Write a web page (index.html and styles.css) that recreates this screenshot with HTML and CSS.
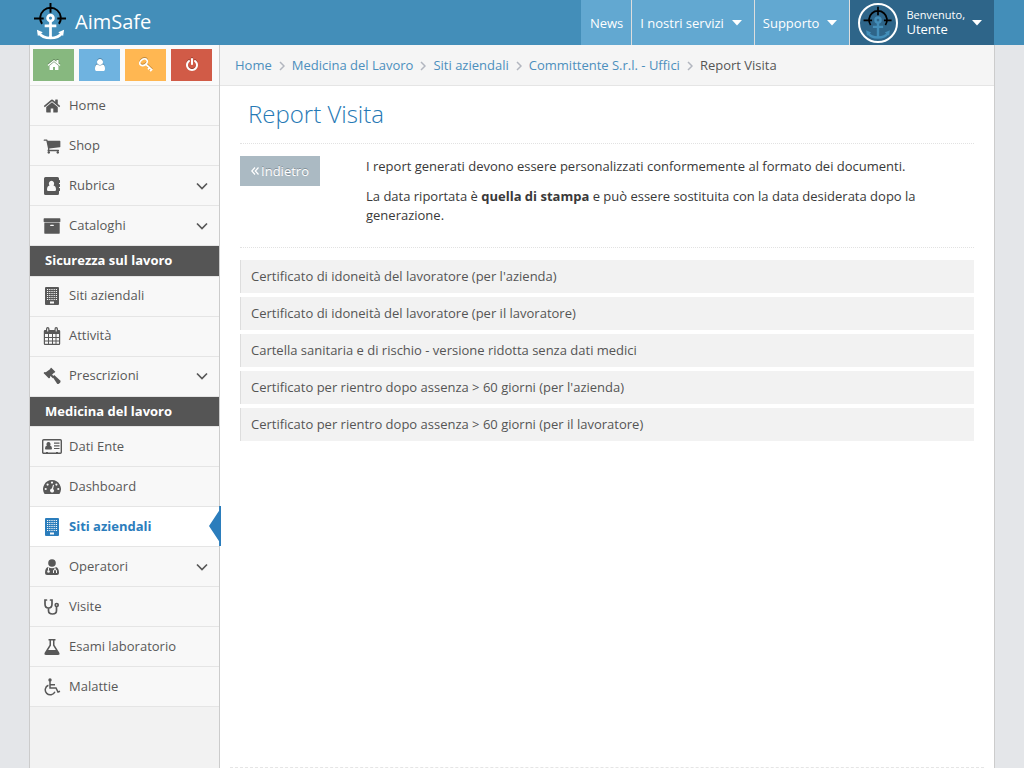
FILE: index.html
```html
<!DOCTYPE html>
<html lang="it">
<head>
<meta charset="utf-8">
<title>Report Visita - AimSafe</title>
<link rel="stylesheet" href="styles.css">
</head>
<body>
<svg class="defs" aria-hidden="true">
  <symbol id="home" viewBox="0 0 1792 1792"><path d="M1472 992v480q0 26-19 45t-45 19h-384v-384h-256v384h-384q-26 0-45-19t-19-45v-480q0-1 .5-3t.5-3l575-474 575 474q1 2 1 6zm223-69l-62 74q-8 9-21 11h-3q-13 0-21-7l-692-577-692 577q-12 8-24 7-13-2-21-11l-62-74q-8-10-7-23.5t11-21.5l719-599q32-26 76-26t76 26l244 204v-195q0-14 9-23t23-9h192q14 0 23 9t9 23v408l219 182q10 8 11 21.5t-7 23.5z"/></symbol>
  <symbol id="user" viewBox="0 0 1792 1792"><path d="M1536 1399q0 109-62.500 187t-150.500 78h-854q-88 0-150.500-78t-62.500-187q0-85 8.500-160.500t31.500-152 58.500-131 94-89 134.500-34.500q131 128 313 128t313-128q76 0 134.500 34.500t94 89 58.500 131 31.500 152 8.500 160.500zm-256-887q0 159-112.500 271.500t-271.500 112.500-271.500-112.500-112.500-271.500 112.500-271.500 271.500-112.500 271.500 112.500 112.500 271.500z"/></symbol>
  <symbol id="power" viewBox="0 0 1792 1792"><path d="M1664 896q0 156-61 298t-164 245-245 164-298 61-298-61-245-164-164-245-61-298q0-182 80.500-343t226.500-270q43-32 95.500-25t83.500 50q32 42 24.500 94.500t-49.500 84.500q-98 74-151.500 181t-53.500 228q0 104 40.500 198.500t109.500 163.500 163.500 109.500 198.500 40.500 198.500-40.500 163.500-109.500 109.500-163.500 40.500-198.500q0-121-53.500-228t-151.500-181q-42-32-49.500-84.500t24.500-94.500q31-43 84-50t95 25q146 109 226.500 270t80.500 343zm-640-768v640q0 52-38 90t-90 38-90-38-38-90v-640q0-52 38-90t90-38 90 38 38 90z"/></symbol>
  <symbol id="key" viewBox="0 0 18 18"><g fill="none" stroke="currentColor" stroke-width="2.200"><ellipse cx="5.800" cy="5.500" rx="5.200" ry="3.800" transform="rotate(-35 5.800 5.500)"/><path d="M8.700 8l8.300 7.500M11.500 14.500l2.600-2.600M14.300 16.800l2.600-2.600"/></g></symbol>
  <symbol id="cart" viewBox="0 0 1792 1792"><path d="M704 1536q0 52-38 90t-90 38-90-38-38-90 38-90 90-38 90 38 38 90zm896 0q0 52-38 90t-90 38-90-38-38-90 38-90 90-38 90 38 38 90zm128-1088v512q0 24-16.500 42.500t-40.500 21.500l-1044 122q13 60 13 70 0 16-24 64h920q26 0 45 19t19 45-19 45-45 19h-1024q-26 0-45-19t-19-45q0-11 8-31.500t16-36 21.500-40 15.500-29.500l-177-823h-204q-26 0-45-19t-19-45 19-45 45-19h256q16 0 28.500 6.500t19.500 15.500 13 24.500 8 26 5.500 29.500 4.500 26h1201q26 0 45 19t19 45z"/></symbol>
  <symbol id="archive" viewBox="0 0 1792 1792"><path d="M1088 832q0-26-19-45t-45-19h-256q-26 0-45 19t-19 45 19 45 45 19h256q26 0 45-19t19-45zm576-192v960q0 26-19 45t-45 19h-1408q-26 0-45-19t-19-45v-960q0-26 19-45t45-19h1408q26 0 45 19t19 45zm64-448v256q0 26-19 45t-45 19h-1536q-26 0-45-19t-19-45v-256q0-26 19-45t45-19h1536q26 0 45 19t19 45z"/></symbol>
  <symbol id="book" viewBox="0 0 18 18"><path fill-rule="evenodd" d="M2.500 0h12q1.500 0 1.500 1.500V3h.700q.3 0 .3.400v2.200q0 .4-.3.400H16v1h.700q.3 0 .3.400v2.200q0 .4-.3.400H16v1h.700q.3 0 .3.400v2.200q0 .4-.3.400H16v2.500q0 1.500-1.500 1.500h-12Q1 18 1 16.500v-15Q1 0 2.500 0zM8.500 3.700a2.700 2.900 0 0 0-2 4.800Q4 9 4 12.800q0 1.200 1.200 1.200h6.600q1.200 0 1.200-1.200 0-3.800-2.500-4.300a2.700 2.900 0 0 0-2-4.800z"/></symbol>
  <symbol id="building" viewBox="0 0 18 18"><path d="M2 1q0-1 1-1h12q1 0 1 1v16q0 1-1 1H3q-1 0-1-1z"/><path class="cut" d="M4 2.500h10M4 4.500h10M4 6.500h10M4 8.500h10M4 10.500h10M4 12.500h10" stroke-dasharray="1.200 1"/><path class="cut-fill" d="M7 14.500h4v2H7z"/></symbol>
  <symbol id="calendar" viewBox="0 0 18 18"><path fill-rule="evenodd" d="M2 3h1V2Q3 0 4.700 0T6.500 2v1h5V2q0-2 1.700-2T15 2v1h1q1 0 1.200 1v12.700q0 1.200-1.200 1.200H2Q.8 17.900.8 16.700V4.200Q.8 3 2 3zm0 4v3h3V7zm4 0v3h3V7zm4 0v3h2.500V7zm3.500 0v3H16V7zM2 11v2.500h3V11zm4 0v2.500h3V11zm4 0v2.500h2.500V11zm3.500 0v2.500H16V11zM2 14.500v2.300h3v-2.300zm4 0v2.300h3v-2.300zm4 0v2.300h2.500v-2.300zm3.500 0v2.300H16v-2.300z"/><path class="cut" d="M4.700 1.500v3M13.200 1.500v3"/></symbol>
  <symbol id="gavel" viewBox="0 0 18 18"><path d="M7.500 1l.8-.3 4 4-.4.900-.9.100-4 4 .1.900-.7.600-.7.100-5-5 .2-.8.900-.4 1 .1L7.300 2z"/><path d="M9.500 9.800l1.700-1.700 6 5.500q.8.900 0 1.800l-1.300 1.300q-.9.700-1.800 0z"/><path d="M8 8l2.600 2.600" stroke="currentColor" stroke-width="2"/></symbol>
  <symbol id="card" viewBox="0 0 20 16"><rect x=".700" y=".700" width="18.600" height="13.600" rx="1" fill="none" stroke="currentColor" stroke-width="1.400"/><path d="M6.500 3a2 2.200 0 0 0-1.600 3.600Q3 7 3 9.500q0 1 .8 1h5.400q.8 0 .8-1 0-2.500-1.900-2.900A2 2.200 0 0 0 6.500 3zM12 3.500h5.500v1.200H12zm0 2.700h5.500v1.200H12zm0 2.700h5.500v1.200H12zM4 13h2v1.500H4zm10 0h2v1.500h-2z"/></symbol>
  <symbol id="gauge" viewBox="0 0 18 18"><path d="M9 2a9 9 0 0 1 7.600 13.700q-.3.400-.7.400H2.100q-.4 0-.7-.4A9 9 0 0 1 9 2z"/><g class="cut-fill"><circle cx="2.700" cy="11" r="1.100"/><circle cx="4.600" cy="6.600" r="1.100"/><circle cx="9" cy="4.600" r="1.100"/><circle cx="13.400" cy="6.600" r="1.100"/><circle cx="15.300" cy="11" r="1.100"/><path d="M10 6.800l1 .3-.9 3.800a2 2 0 1 1-1.200-.3z"/></g></symbol>
  <symbol id="doctor" viewBox="0 0 18 18"><circle cx="9" cy="5" r="3.800"/><path d="M5 9q4 2.500 8 0 3 1 3 6 0 2-2 2H4q-2 0-2-2 0-5 3-6z"/><path class="cut" d="M5.500 9.500v3M12 9.500v2M10.500 15v-2q0-1.500 1.500-1.500t1.500 1.500v2"/><circle class="cut-fill" cx="5.500" cy="13.500" r="1.300"/></symbol>
  <symbol id="stethoscope" viewBox="0 0 18 18"><g fill="none" stroke="currentColor" stroke-width="1.700" stroke-linecap="round"><path d="M3.500 2H2v4q0 4 3.500 4T9 6V2H7.500M5.500 10v2.500q0 3.500 4 3.500t4-3.500V9"/><circle cx="13.700" cy="7" r="1.500"/></g></symbol>
  <symbol id="flask" viewBox="0 0 18 18"><path fill-rule="evenodd" d="M5.500 1h7v1.500h-1V7l4.700 7.500Q17.300 17 15 17H3q-2.300 0-1.200-2.500L6.500 7V2.500h-1zM8 2.500v5L5.200 12h7.600L10 7.500v-5z"/></symbol>
  <symbol id="wheelchair" viewBox="0 0 18 18"><circle cx="7" cy="1.900" r="1.700"/><g fill="none" stroke="currentColor" stroke-width="1.500"><path d="M7 3v7h6l2 4 2-.8M7 6.700h5M5.400 7.200a5 5 0 1 0 6.500 6.500"/></g></symbol>
  <symbol id="chevron" viewBox="0 0 12 8"><path d="M1 1.500l5 5 5-5" fill="none" stroke="currentColor" stroke-width="1.700"/></symbol>
  <symbol id="sep" viewBox="0 0 6 10"><path d="M1 1l4 4-4 4" fill="none" stroke="currentColor" stroke-width="1.500"/></symbol>
  <symbol id="back" viewBox="0 0 8 8"><path d="M4 .5L.8 4 4 7.500M7.500 .5L4.300 4l3.200 3.500" fill="none" stroke="currentColor" stroke-width="1.200"/></symbol>
  <symbol id="caret" viewBox="0 0 10 6"><path d="M0 0h10L5 5.500z"/></symbol>
  <symbol id="logo" viewBox="0 0 34 40"><g fill="none"><path d="M8.300 22.500A10.600 10.600 0 1 1 25.700 22.500M17 1v10M0 17h10M24 17h9" stroke="#000" stroke-width="2"/><g stroke="currentColor" stroke-width="2.800"><circle cx="17" cy="16.500" r="3"/><path d="M17 20v17M11 24.500h12M5 31.500q3.500 5.500 12 5.500t12-5.500"/></g></g><path d="M3 28.500l6 2.700L4 35zM31 28.500l-6 2.700L30 35z" fill="currentColor"/></symbol>
</svg>

<header class="navbar">
  <a class="brand" href="#"><svg class="brand-logo"><use href="#logo"/></svg>AimSafe</a>
  <nav class="topnav">
    <a class="topnav-item" href="#">News</a>
    <button class="topnav-item" type="button">I nostri servizi<svg class="caret"><use href="#caret"/></svg></button>
    <button class="topnav-item" type="button">Supporto<svg class="caret"><use href="#caret"/></svg></button>
    <button class="topnav-item account" type="button">
      <span class="avatar"><svg class="avatar-logo"><use href="#logo"/></svg></span>
      <span class="account-name"><small>Benvenuto,</small>Utente</span>
      <svg class="caret"><use href="#caret"/></svg>
    </button>
  </nav>
</header>

<div class="container">
  <aside class="sidebar">
    <div class="shortcuts">
      <button class="shortcut green" type="button" aria-label="Home"><svg><use href="#home"/></svg></button>
      <button class="shortcut blue" type="button" aria-label="Profilo"><svg><use href="#user"/></svg></button>
      <button class="shortcut orange" type="button" aria-label="Password"><svg><use href="#key"/></svg></button>
      <button class="shortcut red" type="button" aria-label="Esci"><svg><use href="#power"/></svg></button>
    </div>
    <ul class="menu">
      <li><a href="#"><svg class="icon"><use href="#home"/></svg>Home</a></li>
      <li><a href="#"><svg class="icon"><use href="#cart"/></svg>Shop</a></li>
      <li><a href="#"><svg class="icon"><use href="#book"/></svg>Rubrica<svg class="arrow"><use href="#chevron"/></svg></a></li>
      <li><a href="#"><svg class="icon"><use href="#archive"/></svg>Cataloghi<svg class="arrow"><use href="#chevron"/></svg></a></li>
      <li class="heading">Sicurezza sul lavoro</li>
      <li><a href="#"><svg class="icon"><use href="#building"/></svg>Siti aziendali</a></li>
      <li><a href="#"><svg class="icon"><use href="#calendar"/></svg>Attività</a></li>
      <li><a href="#"><svg class="icon"><use href="#gavel"/></svg>Prescrizioni<svg class="arrow"><use href="#chevron"/></svg></a></li>
      <li class="heading">Medicina del lavoro</li>
      <li><a href="#"><svg class="icon wide"><use href="#card"/></svg>Dati Ente</a></li>
      <li><a href="#"><svg class="icon"><use href="#gauge"/></svg>Dashboard</a></li>
      <li class="active"><a href="#"><svg class="icon"><use href="#building"/></svg>Siti aziendali</a></li>
      <li><a href="#"><svg class="icon"><use href="#doctor"/></svg>Operatori<svg class="arrow"><use href="#chevron"/></svg></a></li>
      <li><a href="#"><svg class="icon"><use href="#stethoscope"/></svg>Visite</a></li>
      <li><a href="#"><svg class="icon"><use href="#flask"/></svg>Esami laboratorio</a></li>
      <li><a href="#"><svg class="icon"><use href="#wheelchair"/></svg>Malattie</a></li>
    </ul>
  </aside>

  <main class="main">
    <nav class="breadcrumbs">
      <a href="#">Home</a><svg><use href="#sep"/></svg>
      <a href="#">Medicina del Lavoro</a><svg><use href="#sep"/></svg>
      <a href="#">Siti aziendali</a><svg><use href="#sep"/></svg>
      <a href="#">Committente S.r.l. - Uffici</a><svg><use href="#sep"/></svg>
      <span>Report Visita</span>
    </nav>
    <div class="content">
      <h1>Report Visita</h1>
      <section class="intro">
        <a class="back" href="#"><svg><use href="#back"/></svg>Indietro</a>
        <div class="intro-text">
          <p>I report generati devono essere personalizzati conformemente al formato dei documenti.</p>
          <p>La data riportata è <b>quella di stampa</b> e può essere sostituita con la data desiderata dopo la generazione.</p>
        </div>
      </section>
      <ul class="reports">
        <li><a href="#">Certificato di idoneità del lavoratore (per l'azienda)</a></li>
        <li><a href="#">Certificato di idoneità del lavoratore (per il lavoratore)</a></li>
        <li><a href="#">Cartella sanitaria e di rischio - versione ridotta senza dati medici</a></li>
        <li><a href="#">Certificato per rientro dopo assenza &gt; 60 giorni (per l'azienda)</a></li>
        <li><a href="#">Certificato per rientro dopo assenza &gt; 60 giorni (per il lavoratore)</a></li>
      </ul>
    </div>
    <footer class="footer"></footer>
  </main>
</div>
</body>
</html>
```
FILE: styles.css
```css
* { box-sizing: border-box; }

body {
  margin: 0;
  min-height: 100vh;
  display: flex;
  flex-direction: column;
  background: #e4e6e9;
  color: #393939;
  font-family: "Open Sans", sans-serif;
  font-size: 13px;
  line-height: 1.5;
}

a { text-decoration: none; }
ul { list-style: none; margin: 0; padding: 0; }
button { font: inherit; border: 0; cursor: pointer; }
svg { fill: currentColor; flex: none; }
.defs { position: absolute; width: 0; height: 0; }

/* top bar */
.navbar {
  display: flex;
  justify-content: space-between;
  height: 45px;
  padding: 0 30px;
  background: #438eb9;
  color: #fff;
}
.brand {
  display: flex;
  align-items: center;
  gap: 8px;
  padding: 0 0 2px 4px;
  color: #fff;
  font-size: 20px;
}
.brand-logo { width: 33px; height: 39px; margin-bottom: 1px; }
.topnav { display: flex; }
.topnav-item {
  display: flex;
  align-items: center;
  padding: 2px 8px 0;
  background: #62a8d1;
  color: #fff;
  border-left: 1px solid #ddd;
}
.topnav-item:first-child { border-left: 0; padding-left: 9px; }
.topnav-item .caret { margin: 0 4px 2px 8px; }
.caret { width: 10px; height: 6px; }
.topnav-item.account { background: #2e6589; padding-top: 0; }
.avatar {
  display: flex;
  align-items: center;
  justify-content: center;
  width: 40px;
  height: 40px;
  border: 2px solid #fff;
  border-radius: 50%;
  color: #438eb9;
}
.avatar-logo { width: 30px; height: 34px; }
.account-name {
  margin: 0 0 2px 8px;
  text-align: left;
  line-height: 15px;
}
.account-name small { display: block; font-size: 11px; }
.topnav-item.account .caret { margin: 0 4px 0 7px; }

/* page frame */
.container {
  flex: 1;
  display: flex;
  margin: 0 29px;
  border: solid #ccc;
  border-width: 0 1px;
  background: #fff;
}

/* sidebar */
.sidebar {
  width: 190px;
  flex: none;
  background: #f2f2f2;
  border-right: 1px solid #ccc;
}
.shortcuts {
  display: flex;
  gap: 5px;
  height: 40px;
  padding: 4px 3px;
  background: #fafafa;
}
.shortcut {
  display: flex;
  align-items: center;
  justify-content: center;
  width: 41px;
  height: 32px;
  padding: 0;
  color: #fff;
}
.shortcut svg { width: 14px; height: 14px; filter: drop-shadow(0 -1px 0 rgba(0, 0, 0, .25)); }
.green { background: #87b87f; }
.blue { background: #6fb3e0; }
.orange { background: #ffb752; }
.red { background: #d15b47; }

.menu { border-bottom: 1px solid #e5e5e5; }
.menu li { position: relative; border-top: 1px solid #e5e5e5; }
.menu a {
  display: flex;
  align-items: center;
  height: 39px;
  padding: 0 11px 0 13px;
  background: #f8f8f8;
  color: #585858;
}
.icon { width: 18px; height: 18px; margin-right: 8px; }
.icon.wide { width: 20px; height: 16px; margin: 0 7px 0 -1px; }
.arrow { width: 12px; height: 8px; margin-left: auto; }
.cut { fill: none; stroke: #f8f8f8; }
.cut-fill { fill: #f8f8f8; }
.menu .heading {
  padding: 5px 15px;
  background: #555;
  color: #fff;
  font-weight: 700;
}
.menu .active a { background: #fff; color: #2b7dbc; font-weight: 700; }
.active::after {
  content: "";
  position: absolute;
  top: -1px;
  right: -2px;
  width: 12px;
  height: 40px;
  background: #2b7dbc;
  clip-path: polygon(0 50%, 84% 12%, 84% 0, 100% 0, 100% 100%, 84% 100%, 84% 88%);
}

/* content */
.main {
  flex: 1;
  min-width: 0;
  display: flex;
  flex-direction: column;
}
.breadcrumbs {
  display: flex;
  align-items: center;
  min-height: 41px;
  padding: 2px 15px 0;
  background: #f5f5f5;
  border-bottom: 1px solid #e5e5e5;
  color: #555;
}
.breadcrumbs a { color: #4c8fbd; }
.breadcrumbs svg { width: 6px; height: 10px; margin: 0 7px; color: #b2b6bf; }
.content { flex: 1; padding: 9px 20px 24px; }
h1 {
  margin: 0 0 12px;
  padding: 0 8px 11px;
  border-bottom: 1px dotted #e2e2e2;
  color: #2679b5;
  font-size: 24px;
  line-height: 37px;
  font-weight: 300;
}
.intro {
  display: flex;
  align-items: flex-start;
  padding-bottom: 11px;
  border-bottom: 1px dotted #e2e2e2;
}
.back {
  display: flex;
  align-items: center;
  justify-content: center;
  gap: 2px;
  width: 80px;
  flex: none;
  background: #abbac3;
  color: #fff;
  line-height: 30px;
  text-shadow: 0 -1px 0 rgba(0, 0, 0, .25);
}
.back svg { width: 8px; height: 8px; }
.intro-text { margin-left: 46px; padding: 1px 12px 0 0; }
.intro p { margin: 0 0 10px; }
.reports { display: flex; flex-direction: column; gap: 4px; margin-top: 12px; }
.reports a {
  display: block;
  padding: 0 10px;
  border-left: 1px solid #ddd;
  background: #f2f2f2;
  color: #555;
  line-height: 33px;
}
.footer { margin: 0 10px; border-top: 1px dashed #e5e5e5; }
```
